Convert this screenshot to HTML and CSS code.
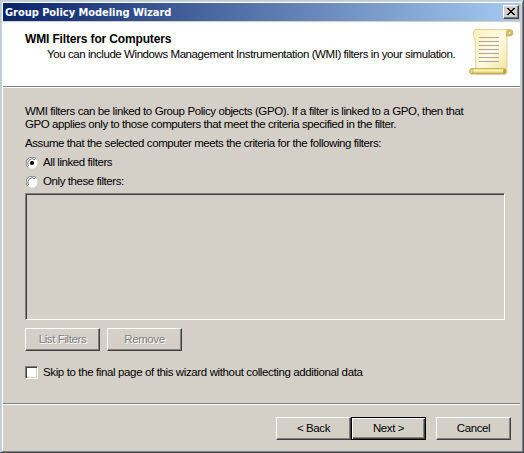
FILE: index.html
```
<!DOCTYPE html>
<html lang="en">
<head>
<meta charset="utf-8">
<title>Group Policy Modeling Wizard</title>
<link rel="stylesheet" href="styles.css">
</head>
<body>
<div class="window">
  <div class="titlebar">
    <span class="caption">Group Policy Modeling Wizard</span>
    <button class="close" aria-label="Close"><svg width="8" height="7" viewBox="0 0 8 7" shape-rendering="crispEdges"><path d="M0 0h2v1h1v1h2V1h1V0h2v1H7v1H6v1H5v1h1v1h1v1h1v1H6V6H5V5H3v1H2v1H0V6h1V5h1V4h1V3H2V2H1V1H0z" fill="#000"/></svg></button>
  </div>
  <header class="header">
    <div class="heading">
      <h1>WMI Filters for Computers</h1>
      <p class="t-sub">You can include Windows Management Instrumentation (WMI) filters in your simulation.</p>
    </div>
    <svg class="scroll" width="46" height="48" viewBox="0 0 46 48">
      <defs>
        <linearGradient id="paper" x1="0" y1="0" x2="1" y2="1"><stop offset="0" stop-color="#fff0b8"/><stop offset=".5" stop-color="#fffae0"/><stop offset="1" stop-color="#f3df98"/></linearGradient>
        <linearGradient id="roll" x1="0" y1="0" x2="0" y2="1"><stop offset="0" stop-color="#e5d27d"/><stop offset=".4" stop-color="#fff9b8"/><stop offset="1" stop-color="#c5a94c"/></linearGradient>
      </defs>
      <path d="M7 .5H41Q38.500 2 39 8V42Q39 45 36 45H8Q8 38 7.500 32L7 10Q5 8 5.500 4Q5.500 .5 8 .5z" fill="url(#paper)" stroke="#dac98c" stroke-width=".8"/>
      <path d="M38.500 7Q37.500 .5 41 .5Q45 .5 45 3.700Q45 7 41.500 7z" fill="#dcc76c" stroke="#b9a354" stroke-width=".7"/>
      <circle cx="41.500" cy="4" r="1.600" fill="#f6e9a7" stroke="#ae9443" stroke-width=".6"/>
      <path d="M3 39.500H37Q39.500 42 37 45H3Q0 42 3 39.500z" fill="url(#roll)" stroke="#c2a94e" stroke-width=".8"/>
      <ellipse cx="3.500" cy="42.300" rx="1.700" ry="2.200" fill="#ead987" stroke="#b59b44" stroke-width=".6"/>
      <ellipse cx="36.500" cy="42.300" rx="1.500" ry="2.200" fill="#bc9f3d"/>
      <path d="M11 8.500H31M11 12.500H31M11 16.500H31M11 20.500H31M11 24.500H31M11 28.500H31M11 32.500H31" stroke="#a8a4a8"/>
    </svg>
  </header>
  <main class="content">
    <p><span class="t-p1">WMI filters can be linked to Group Policy objects (GPO). If a filter is linked to a GPO, then that</span><br><span>GPO applies only to those computers that meet the criteria specified in the filter.</span></p>
    <p class="assume">Assume that the selected computer meets the criteria for the following filters:</p>
    <div class="option">
      <svg class="radio" width="12" height="12" viewBox="0 0 12 12"><circle cx="6" cy="6" r="5.500" fill="#fff"/><path d="M1.800 10.200A5.500 5.500 0 0 1 10.200 1.800" fill="none" stroke="#808080"/><path d="M2.700 9A4.500 4.500 0 0 1 9 2.700" fill="none" stroke="#404040" stroke-width=".7"/><circle cx="6" cy="6" r="2.100"/></svg>
      <span>All linked filters</span>
    </div>
    <div class="option">
      <svg class="radio" width="12" height="12" viewBox="0 0 12 12"><circle cx="6" cy="6" r="5.500" fill="#fff"/><path d="M1.800 10.200A5.500 5.500 0 0 1 10.200 1.800" fill="none" stroke="#808080"/><path d="M2.700 9A4.500 4.500 0 0 1 9 2.700" fill="none" stroke="#404040" stroke-width=".7"/></svg>
      <span>Only these filters:</span>
    </div>
    <div class="listbox"></div>
    <div class="actions">
      <button class="btn" disabled>List Filters</button>
      <button class="btn" disabled>Remove</button>
    </div>
    <div class="skip"><i class="check"></i><span class="t-skip">Skip to the final page of this wizard without collecting additional data</span></div>
  </main>
  <footer class="footer">
    <button class="btn">&lt; Back</button>
    <button class="btn default">Next &gt;</button>
    <button class="btn cancel">Cancel</button>
  </footer>
</div>
</body>
</html>
```
FILE: styles.css
```
* { box-sizing: border-box; margin: 0; padding: 0; }
body { width: 524px; height: 453px; overflow: hidden; font: 11.5px/13px "Liberation Sans", Arial, sans-serif; letter-spacing: -.42px; color: #000; white-space: nowrap; }
.window { width: 524px; height: 453px; background: #d4d0c8; border: 1px solid; border-color: #b5d0eb #354b66 #3e464c #b5cde8; box-shadow: inset 1px 1px #d4d0c8, inset -1px -1px #808080, inset 2px 2px #fff; padding: 2px 3px 2px 2px; display: flex; flex-direction: column; }
.titlebar { height: 18px; background: linear-gradient(90deg, #0a246a, #a6caf0); display: flex; align-items: center; justify-content: space-between; padding: 0 1px 0 2px; flex: none; }
.caption { font: bold 11px/18px "DejaVu Sans Condensed", sans-serif; color: #fff; letter-spacing: -.04px; padding-top: 1px; }
.close { width: 16px; height: 14px; background: #d4d0c8; border: 1px solid; border-color: #fff #404040 #404040 #fff; box-shadow: inset -1px -1px #808080; display: flex; align-items: center; justify-content: center; padding: 0 1px 1px 0; }
.header { height: 67px; border-top: 1px solid #d4d0c8; border-bottom: 1px solid #fff; background: linear-gradient(#808080, #808080) bottom/100% 1px no-repeat #fff; display: flex; justify-content: space-between; padding: 7px 6px 0 22px; flex: none; }
.heading { padding-top: 3px; }
h1 { font-size: 12px; line-height: 14px; height: 16px; letter-spacing: -.15px; }
.t-sub { padding-left: 22px; letter-spacing: -.43px; }
.scroll { flex: none; }
.content { padding: 17px 15px 0 22px; height: 315px; flex: none; }
.t-p1 { letter-spacing: -.4px; }
.t-skip { letter-spacing: -.375px; }
.assume { margin-top: 6px; }
.option { height: 13px; margin-top: 6px; display: flex; align-items: center; gap: 5px; }
.radio { margin-left: 1px; flex: none; }
.listbox { height: 127px; margin-top: 5px; border: 1px solid; border-color: #808080 #fff #fff #808080; box-shadow: inset 1px 1px #404040; }
.actions { display: flex; gap: 7px; margin-top: 8px; }
.btn { width: 75px; height: 23px; font: inherit; letter-spacing: -.4px; color: #000; background: #d4d0c8; border: 1px solid; border-color: #fff #404040 #404040 #fff; box-shadow: inset -1px -1px #808080; display: flex; align-items: center; justify-content: center; padding-bottom: 1px; }
.btn:disabled { color: #808080; text-shadow: 1px 1px #fff; }
.skip { display: flex; align-items: center; gap: 5px; height: 13px; margin-top: 15px; }
.check { width: 13px; height: 13px; background: #fff; border: 1px solid; border-color: #808080 #fff #fff #808080; box-shadow: inset 1px 1px #404040, inset -1px -1px #d4d0c8; }
.footer { flex: 1; border-top: 1px solid #808080; box-shadow: inset 0 1px #fff; padding: 13px 9px 0 0; display: flex; justify-content: flex-end; }
.default { border-color: #000; box-shadow: inset 1px 1px #fff, inset -1px -1px #404040, inset -2px -2px #808080; }
.cancel { margin-left: 10px; }
```
